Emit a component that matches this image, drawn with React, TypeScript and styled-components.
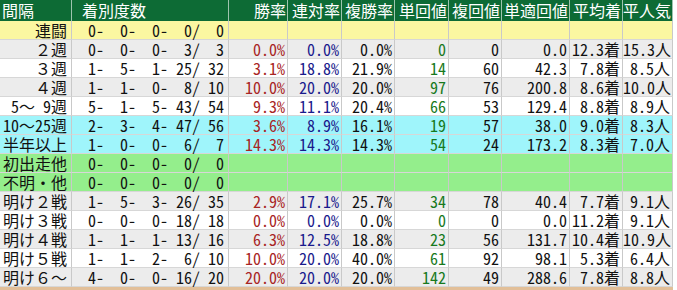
import React from "react";
import styled, { createGlobalStyle } from "styled-components";

const GlobalStyle = createGlobalStyle`
  html, body {
    margin: 0;
    padding: 0;
    background: #ffffff;
  }
`;

const COLUMNS = "72px 157px 59px 54px 53px 54px 53px 68px 53px 50px";

const Sheet = styled.div`
  width: 677px;
  height: 290px;
  overflow: hidden;
  background: #ffffff;
  font-family: "Noto Sans Mono CJK JP", "Noto Sans CJK JP", monospace;
  font-size: 16px;
`;

const Table = styled.div`
  width: 673px;
  display: flex;
  flex-direction: column;
`;

const HeaderRow = styled.div`
  display: grid;
  grid-template-columns: ${COLUMNS};
  height: 21px;
  background: #0d6b35;
  color: #ffffff;
`;

const HeadCell = styled.div<{ $align?: "left" | "right"; $indent?: number }>`
  border-right: 1px solid rgba(255, 255, 255, 0.6);
  line-height: 21px;
  white-space: nowrap;
  text-align: ${(p) => p.$align ?? "right"};
  padding: 0 1px 0 ${(p) => p.$indent ?? 0}px;
`;

const Row = styled.div<{ $bg: string }>`
  display: grid;
  grid-template-columns: ${COLUMNS};
  height: 19px;
  background: ${(p) => p.$bg};
`;

const Cell = styled.div<{ $color?: string }>`
  border-right: 1px solid #c9c9c9;
  border-bottom: 1px solid #d7d7d7;
  line-height: 18px;
  text-align: right;
  padding-right: 2px;
  white-space: nowrap;
  color: ${(p) => p.$color ?? "#111111"};
`;

const LabelCell = styled(Cell)`
  padding-right: 4px;
`;

const RecordCell = styled(Cell)`
  display: flex;
  padding-right: 0;
`;

const Part = styled.span<{ $w: number }>`
  display: inline-block;
  width: ${(p) => p.$w}px;
  text-align: right;
`;

const TailRow = styled.div`
  height: 8px;
  background: #e2bf98;
`;

const BG = {
  yellow: "#fbf7a1",
  gray: "#ececec",
  white: "#ffffff",
  cyan: "#9ff5fb",
  green: "#94ee8c",
};

type Stat = {
  label: string;
  bg: string;
  rec: [number, number, number, number, number];
  vals?: [string, string, string, string, string, string, string, string];
};

const rows: Stat[] = [
  { label: "連闘", bg: BG.yellow, rec: [0, 0, 0, 0, 0] },
  { label: "２週", bg: BG.gray, rec: [0, 0, 0, 3, 3], vals: ["0.0%", "0.0%", "0.0%", "0", "0", "0.0", "12.3着", "15.3人"] },
  { label: "３週", bg: BG.white, rec: [1, 5, 1, 25, 32], vals: ["3.1%", "18.8%", "21.9%", "14", "60", "42.3", "7.8着", "8.5人"] },
  { label: "４週", bg: BG.gray, rec: [1, 1, 0, 8, 10], vals: ["10.0%", "20.0%", "20.0%", "97", "76", "200.8", "8.6着", "10.0人"] },
  { label: "5～ 9週", bg: BG.white, rec: [5, 1, 5, 43, 54], vals: ["9.3%", "11.1%", "20.4%", "66", "53", "129.4", "8.8着", "8.9人"] },
  { label: "10～25週", bg: BG.cyan, rec: [2, 3, 4, 47, 56], vals: ["3.6%", "8.9%", "16.1%", "19", "57", "38.0", "9.0着", "8.3人"] },
  { label: "半年以上", bg: BG.cyan, rec: [1, 0, 0, 6, 7], vals: ["14.3%", "14.3%", "14.3%", "54", "24", "173.2", "8.3着", "7.0人"] },
  { label: "初出走他", bg: BG.green, rec: [0, 0, 0, 0, 0] },
  { label: "不明・他", bg: BG.green, rec: [0, 0, 0, 0, 0] },
  { label: "明け２戦", bg: BG.gray, rec: [1, 5, 3, 26, 35], vals: ["2.9%", "17.1%", "25.7%", "34", "78", "40.4", "7.7着", "9.1人"] },
  { label: "明け３戦", bg: BG.white, rec: [0, 0, 0, 18, 18], vals: ["0.0%", "0.0%", "0.0%", "0", "0", "0.0", "11.2着", "9.1人"] },
  { label: "明け４戦", bg: BG.gray, rec: [1, 1, 1, 13, 16], vals: ["6.3%", "12.5%", "18.8%", "23", "56", "131.7", "10.4着", "10.9人"] },
  { label: "明け５戦", bg: BG.white, rec: [1, 1, 2, 6, 10], vals: ["10.0%", "20.0%", "40.0%", "61", "92", "98.1", "5.3着", "6.4人"] },
  { label: "明け６～", bg: BG.gray, rec: [4, 0, 0, 16, 20], vals: ["20.0%", "20.0%", "20.0%", "142", "49", "288.6", "7.8着", "8.8人"] },
];

// colour per value column: 勝率, 連対率, 複勝率, 単回値, 複回値, 単適回値, 平均着, 平人気
const valueColors = ["#a82424", "#1a1a8c", "#111111", "#17791c", "#111111", "#111111", "#111111", "#111111"];

const headers = ["勝率", "連対率", "複勝率", "単回値", "複回値", "単適回値", "平均着", "平人気"];

export default function App() {
  return (
    <Sheet>
      <GlobalStyle />
      <Table>
        <HeaderRow>
          <HeadCell $align="left" $indent={2}>間隔</HeadCell>
          <HeadCell $align="left" $indent={10}>着別度数</HeadCell>
          {headers.map((h) => (
            <HeadCell key={h}>{h}</HeadCell>
          ))}
        </HeaderRow>
        {rows.map((r) => (
          <Row key={r.label} $bg={r.bg}>
            <LabelCell>{r.label}</LabelCell>
            <RecordCell>
              <Part $w={32}>{r.rec[0]}-</Part>
              <Part $w={32}>{r.rec[1]}-</Part>
              <Part $w={32}>{r.rec[2]}-</Part>
              <Part $w={32}>{r.rec[3]}/</Part>
              <Part $w={24}>{r.rec[4]}</Part>
            </RecordCell>
            {valueColors.map((c, i) => (
              <Cell key={i} $color={c}>
                {r.vals ? r.vals[i] : ""}
              </Cell>
            ))}
          </Row>
        ))}
        <TailRow />
      </Table>
    </Sheet>
  );
}
